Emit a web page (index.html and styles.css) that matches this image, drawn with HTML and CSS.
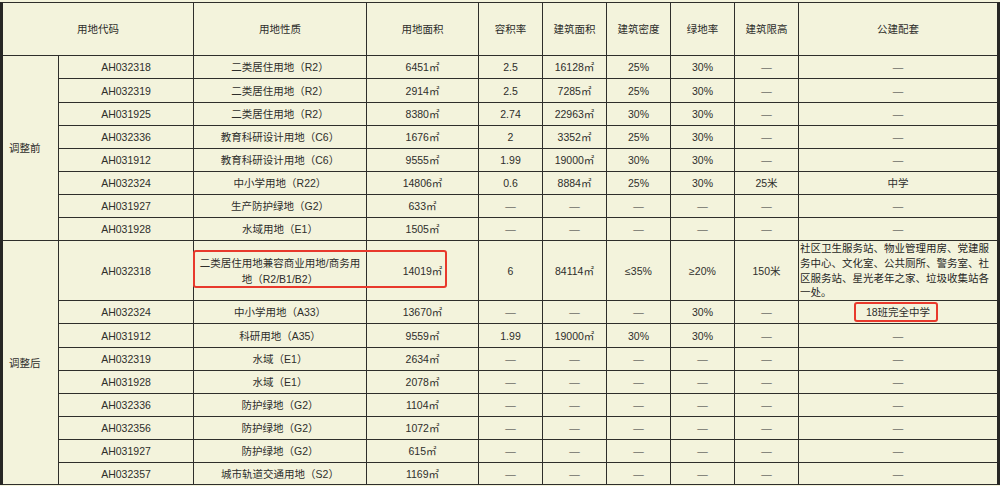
FILE: index.html
```html
<!DOCTYPE html>
<html lang="zh-CN">
<head>
<meta charset="utf-8">
<link rel="stylesheet" href="styles.css">
</head>
<body>
<div class="sheet">
<table class="grid">
<colgroup>
<col class="c-stage"><col class="c-code"><col class="c-type"><col class="c-area"><col class="c-n"><col class="c-n"><col class="c-n"><col class="c-n"><col class="c-n"><col class="c-pub">
</colgroup>
<thead>
<tr class="head">
<th colspan="2">用地代码</th><th>用地性质</th><th>用地面积</th><th>容积率</th><th>建筑面积</th><th>建筑密度</th><th>绿地率</th><th>建筑限高</th><th>公建配套</th>
</tr>
</thead>
<tbody>
<tr><td class="stage" rowspan="8">调整前</td><td>AH032318</td><td>二类居住用地（R2）</td><td>6451㎡</td><td>2.5</td><td>16128㎡</td><td>25%</td><td>30%</td><td class="dash">—</td><td class="dash">—</td></tr>
<tr class="r24"><td>AH032319</td><td>二类居住用地（R2）</td><td>2914㎡</td><td>2.5</td><td>7285㎡</td><td>25%</td><td>30%</td><td class="dash">—</td><td class="dash">—</td></tr>
<tr><td>AH031925</td><td>二类居住用地（R2）</td><td>8380㎡</td><td>2.74</td><td>22963㎡</td><td>30%</td><td>30%</td><td class="dash">—</td><td class="dash">—</td></tr>
<tr><td>AH032336</td><td>教育科研设计用地（C6）</td><td>1676㎡</td><td>2</td><td>3352㎡</td><td>25%</td><td>30%</td><td class="dash">—</td><td class="dash">—</td></tr>
<tr><td>AH031912</td><td>教育科研设计用地（C6）</td><td>9555㎡</td><td>1.99</td><td>19000㎡</td><td>30%</td><td>30%</td><td class="dash">—</td><td class="dash">—</td></tr>
<tr><td>AH032324</td><td>中小学用地（R22）</td><td>14806㎡</td><td>0.6</td><td>8884㎡</td><td>25%</td><td>30%</td><td>25米</td><td>中学</td></tr>
<tr><td>AH031927</td><td>生产防护绿地（G2）</td><td>633㎡</td><td class="dash">—</td><td class="dash">—</td><td class="dash">—</td><td class="dash">—</td><td class="dash">—</td><td class="dash">—</td></tr>
<tr><td>AH031928</td><td>水域用地（E1）</td><td>1505㎡</td><td class="dash">—</td><td class="dash">—</td><td class="dash">—</td><td class="dash">—</td><td class="dash">—</td><td class="dash">—</td></tr>

<tr class="big"><td class="stage" rowspan="9">调整后</td><td>AH032318</td><td class="wrap">二类居住用地兼容商业用地/商务用地（R2/B1/B2）</td><td>14019㎡</td><td>6</td><td>84114㎡</td><td>≤35%</td><td>≥20%</td><td>150米</td><td class="pub">社区卫生服务站、物业管理用房、党建服务中心、文化室、公共厕所、警务室、社区服务站、星光老年之家、垃圾收集站各一处。</td></tr>
<tr><td>AH032324</td><td>中小学用地（A33）</td><td>13670㎡</td><td class="dash">—</td><td class="dash">—</td><td class="dash">—</td><td>30%</td><td class="dash">—</td><td>18班完全中学</td></tr>
<tr class="r24"><td>AH031912</td><td>科研用地（A35）</td><td>9559㎡</td><td>1.99</td><td>19000㎡</td><td>30%</td><td>30%</td><td class="dash">—</td><td class="dash">—</td></tr>
<tr><td>AH032319</td><td>水域（E1）</td><td>2634㎡</td><td class="dash">—</td><td class="dash">—</td><td class="dash">—</td><td class="dash">—</td><td class="dash">—</td><td class="dash">—</td></tr>
<tr><td>AH031928</td><td>水域（E1）</td><td>2078㎡</td><td class="dash">—</td><td class="dash">—</td><td class="dash">—</td><td class="dash">—</td><td class="dash">—</td><td class="dash">—</td></tr>
<tr><td>AH032336</td><td>防护绿地（G2）</td><td>1104㎡</td><td class="dash">—</td><td class="dash">—</td><td class="dash">—</td><td class="dash">—</td><td class="dash">—</td><td class="dash">—</td></tr>
<tr><td>AH032356</td><td>防护绿地（G2）</td><td>1072㎡</td><td class="dash">—</td><td class="dash">—</td><td class="dash">—</td><td class="dash">—</td><td class="dash">—</td><td class="dash">—</td></tr>
<tr><td>AH031927</td><td>防护绿地（G2）</td><td>615㎡</td><td class="dash">—</td><td class="dash">—</td><td class="dash">—</td><td class="dash">—</td><td class="dash">—</td><td class="dash">—</td></tr>
<tr class="r22"><td>AH032357</td><td>城市轨道交通用地（S2）</td><td>1169㎡</td><td class="dash">—</td><td class="dash">—</td><td class="dash">—</td><td class="dash">—</td><td class="dash">—</td><td class="dash">—</td></tr>
</tbody>
</table>
<div class="mark mark-type"></div>
<div class="mark mark-school"></div>
</div>
</body>
</html>
```

FILE: styles.css
```css
html, body {
  margin: 0;
  padding: 0;
  background: #f3f3dc;
}

.sheet {
  position: relative;
  width: 1000px;
  height: 486px;
  padding-top: 2px;
  box-sizing: border-box;
  overflow: hidden;
}

.grid {
  width: 1000px;
  table-layout: fixed;
  border-collapse: separate;
  border-spacing: 0;
  border-top: 1px solid #2e2e2b;
  border-left: 3px solid #262624;
  border-right: 3px solid #262624;
  font-family: "Liberation Sans", "Noto Sans CJK SC", sans-serif;
  font-size: 10.5px;
  color: #2e2e2b;
}

.c-stage { width: 56px; }
.c-code { width: 135px; }
.c-type { width: 173px; }
.c-area { width: 112px; }
.c-n { width: 64px; }
.c-pub { width: 198px; }

.grid th,
.grid td {
  border-right: 1px solid #2e2e2b;
  border-bottom: 1px solid #2e2e2b;
  padding: 0 2px;
  text-align: center;
  vertical-align: middle;
  font-weight: normal;
  white-space: nowrap;
  overflow: hidden;
  box-sizing: border-box;
  line-height: 14px;
}

.grid th:last-child,
.grid td:last-child {
  border-right: none;
}

.grid tr { height: 23px; }
.grid tr.head { height: 53px; }
.grid tr.r24 { height: 24px; }
.grid tr.r22 { height: 22px; }
.grid tr.big { height: 60px; }

.grid td.stage {
  text-align: left;
  padding-left: 6px;
}

.grid td.dash {
  color: #6e6e68;
}

.grid td.wrap {
  white-space: normal;
  line-height: 16px;
}

.grid td.pub {
  white-space: normal;
  text-align: left;
  padding: 0 1px;
  line-height: 14.75px;
  color: #262624;
}

.mark {
  position: absolute;
  border: 2px solid #e8392c;
  border-radius: 3px;
  box-sizing: border-box;
}

.mark-type {
  left: 193px;
  top: 250px;
  width: 254px;
  height: 38px;
}

.mark-school {
  left: 854px;
  top: 302px;
  width: 84px;
  height: 20px;
}
```
